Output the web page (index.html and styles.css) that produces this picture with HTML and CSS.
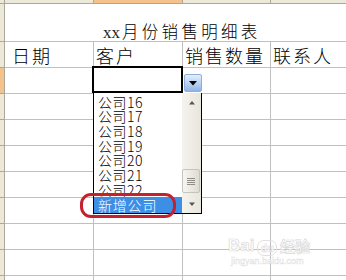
FILE: index.html
```html
<!DOCTYPE html>
<html lang="zh-CN">
<head>
    <meta charset="UTF-8">
    <meta name="viewport" content="width=device-width, initial-scale=1.0">
    <title>xx月份销售明细表</title>
    <link rel="stylesheet" href="styles.css">
</head>
<body>
    <div class="sheet">
        <!-- column headers (only a sliver shows) -->
        <div class="hd"></div>
        <div class="hd"></div>
        <div class="hd on"></div>
        <div class="hd"></div>
        <div class="hd"></div>

        <div class="rh"></div>
        <div class="cell title"><span class="title-x">xx</span><span class="title-cn">月份销售明细表</span></div>

        <div class="rh"></div>
        <div class="cell head first">日期</div>
        <div class="cell head">客户</div>
        <div class="cell head">销售数量</div>
        <div class="cell head">联系人</div>

        <div class="rh on"></div><div class="cell"></div><div class="cell"></div><div class="cell"></div><div class="cell"></div>
        <div class="rh"></div><div class="cell"></div><div class="cell"></div><div class="cell"></div><div class="cell"></div>
        <div class="rh"></div><div class="cell"></div><div class="cell"></div><div class="cell"></div><div class="cell"></div>
        <div class="rh"></div><div class="cell"></div><div class="cell"></div><div class="cell"></div><div class="cell"></div>
        <div class="rh"></div><div class="cell"></div><div class="cell"></div><div class="cell"></div><div class="cell"></div>
        <div class="rh"></div><div class="cell"></div><div class="cell"></div><div class="cell"></div><div class="cell"></div>
        <div class="rh"></div><div class="cell"></div><div class="cell"></div><div class="cell"></div><div class="cell"></div>
        <div class="rh"></div><div class="cell"></div><div class="cell"></div><div class="cell"></div><div class="cell"></div>
        <div class="rh"></div><div class="cell"></div><div class="cell"></div><div class="cell"></div><div class="cell"></div>
    </div>

    <!-- validation dropdown on the active cell -->
    <div class="picker">
        <div class="picker-head">
            <div class="active-cell"></div>
            <div class="drop-btn">
                <svg width="8" height="5" viewBox="0 0 8 5"><path d="M0 0h8L4 4.5z" fill="#000"/></svg>
            </div>
        </div>
        <div class="picker-list">
            <div class="items">
                <div class="item">公司16</div>
                <div class="item">公司17</div>
                <div class="item">公司18</div>
                <div class="item">公司19</div>
                <div class="item">公司20</div>
                <div class="item">公司21</div>
                <div class="item">公司22</div>
                <div class="item new">新增公司</div>
            </div>
            <div class="scroll">
                <div class="arrow">
                    <svg width="6" height="4" viewBox="0 0 6 4"><path d="M0 3.5h6L3 0z" fill="#555"/></svg>
                </div>
                <div class="track">
                    <div class="thumb">
                        <span></span><span></span><span></span><span></span>
                    </div>
                </div>
                <div class="arrow">
                    <svg width="6" height="4" viewBox="0 0 6 4"><path d="M0 0.5h6L3 4z" fill="#555"/></svg>
                </div>
            </div>
        </div>
    </div>

    <div class="mark-ring"></div>

    <div class="watermark">
        <div class="wm-logo">
            <span>Bai</span>
            <span class="wm-paw">du</span>
            <span class="wm-cn">经验</span>
        </div>
        <div class="wm-url">jingyan.baidu.com</div>
    </div>
</body>
</html>
```

FILE: styles.css
```css
* {
    margin: 0;
    padding: 0;
    box-sizing: border-box;
}

body {
    width: 346px;
    height: 280px;
    overflow: hidden;
    background: #fff;
    font-family: "Noto Sans CJK SC", sans-serif;
    color: #000;
    position: relative;
}

.sheet {
    height: 280px;
    overflow: hidden;
    display: grid;
    grid-template-columns: 5px 89px 89px 88px 76px;
    grid-template-rows: 4px 38px 26px;
    grid-auto-rows: 26px;
}

.hd, .rh {
    background: #ece9d8;
    border-right: 1px solid #aca899;
    border-bottom: 1px solid #aca899;
}

.hd.on, .rh.on {
    background: #f5c28c;
}

.cell {
    border-right: 1px solid #c0c0c0;
    border-bottom: 1px solid #c0c0c0;
}

.title {
    grid-column: 2 / 6;
    border-right: 0;
    padding: 19px 0 0 98px;
    line-height: 16.5px;
    white-space: nowrap;
}

.title-x {
    font-family: "Liberation Serif", serif;
    font-size: 17px;
    color: #222;
    margin-right: 2px;
}

.title-cn {
    font-size: 16.5px;
    font-weight: 300;
    letter-spacing: 3.3px;
}

.head {
    font-size: 18px;
    font-weight: 300;
    line-height: 18px;
    letter-spacing: 2px;
    padding: 4px 0 0 2px;
    white-space: nowrap;
}

.head.first {
    padding-left: 7px;
}

.picker {
    position: absolute;
    left: 92px;
    top: 66px;
}

.picker-head {
    display: flex;
}

.active-cell {
    width: 91px;
    height: 27px;
    border: 2px solid #000;
    background: #fff;
}

.drop-btn {
    width: 18px;
    height: 18px;
    margin: 8px 0 0 1px;
    display: flex;
    align-items: center;
    justify-content: center;
    border: 1px solid #8eaedb;
    border-radius: 2px;
    background: linear-gradient(#e4eefb, #b7d0f1 55%, #8fb4e6);
}

.picker-list {
    display: flex;
    width: 109px;
    height: 121px;
    margin-left: 1px;
    border: 1px solid #000;
    border-top: 0;
    background: #fff;
}

.items {
    width: 88px;
    padding-top: 1.5px;
    display: flex;
    flex-direction: column;
    overflow: hidden;
}

.item {
    flex: none;
    height: 14.7px;
    line-height: 14.7px;
    font-size: 14px;
    font-weight: 300;
    letter-spacing: 0.5px;
    padding-left: 4px;
    white-space: nowrap;
}

.item.new {
    height: 16px;
    line-height: 16px;
    margin-top: auto;
    background: #3d8fe6;
    color: #fff;
    letter-spacing: 0.8px;
}

.scroll {
    width: 19px;
    display: flex;
    flex-direction: column;
    background: linear-gradient(to right, #f4f3ee, #e8e6dc);
}

.arrow {
    height: 19px;
    display: flex;
    align-items: center;
    justify-content: center;
    flex: none;
}

.track {
    flex: 1;
    display: flex;
    flex-direction: column;
    justify-content: flex-end;
    padding-bottom: 1px;
}

.thumb {
    width: 18px;
    height: 24px;
    border: 1px solid #c4c3bc;
    border-radius: 2px;
    background: linear-gradient(to right, #f7f6f2, #dedcd2);
    display: flex;
    flex-direction: column;
    align-items: center;
    justify-content: center;
    gap: 1px;
}

.thumb span {
    width: 8px;
    height: 1px;
    background: #8f8e88;
}

.mark-ring {
    position: absolute;
    left: 80px;
    top: 193px;
    width: 96px;
    height: 25px;
    border: 3.5px solid #c5202d;
    border-radius: 11px;
}

.watermark {
    position: absolute;
    left: 228px;
    top: 236px;
    color: #fff;
    -webkit-text-stroke: 0.7px #d9d9d9;
    font-family: "Liberation Sans", sans-serif;
}

.wm-logo {
    display: flex;
    align-items: flex-end;
    gap: 3px;
    font-size: 17px;
    font-weight: bold;
    line-height: 20px;
}

.wm-paw {
    font-size: 11px;
    line-height: 14px;
    padding: 0 2px;
    border: 1px solid #e0e0e0;
    border-radius: 7px;
    -webkit-text-stroke: 0.5px #d9d9d9;
}

.wm-cn {
    font-family: "Noto Sans CJK SC", sans-serif;
    font-size: 15px;
}

.wm-url {
    font-size: 9px;
    line-height: 11px;
    -webkit-text-stroke: 0.4px #dcdcdc;
    padding-left: 3px;
}
```
